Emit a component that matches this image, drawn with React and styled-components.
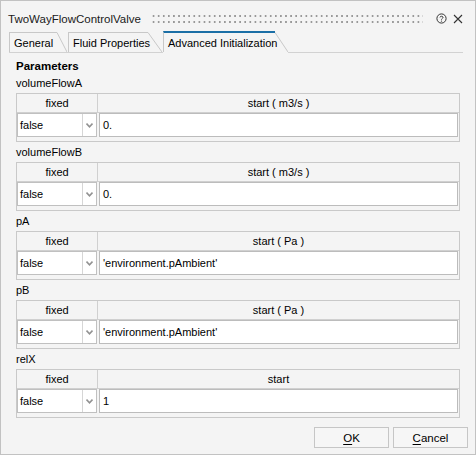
import React from 'react';
import styled, { createGlobalStyle } from 'styled-components';

const sections = [
  { name: 'volumeFlowA', unit: 'start ( m3/s )', value: '0.' },
  { name: 'volumeFlowB', unit: 'start ( m3/s )', value: '0.' },
  { name: 'pA', unit: 'start ( Pa )', value: "'environment.pAmbient'" },
  { name: 'pB', unit: 'start ( Pa )', value: "'environment.pAmbient'" },
  { name: 'relX', unit: 'start', value: '1' },
];

const tabs = [
  { label: 'General', width: 48, slant: 10, pad: 4 },
  { label: 'Fluid Properties', width: 80, slant: 14, pad: 4 },
  { label: 'Advanced Initialization', width: 112, slant: 13, pad: 4, active: true },
];

function Dialog() {
  return (
    <Window>
      <TitleBar>
        <Title>TwoWayFlowControlValve</Title>
        <Grip />
        <TitleIcon aria-label="help">
          <svg width="11" height="11" viewBox="0 0 11 11">
            <circle cx="5.5" cy="5.5" r="4.6" fill="none" stroke="#333" strokeWidth="1" />
            <path d="M4 4.4 C4 2.9 7 2.9 7 4.4 C7 5.4 5.5 5.5 5.5 6.6" fill="none" stroke="#333" strokeWidth="1" />
            <circle cx="5.5" cy="8.1" r="0.6" fill="#333" />
          </svg>
        </TitleIcon>
        <TitleIcon aria-label="close">
          <svg width="10" height="10" viewBox="0 0 10 10">
            <path d="M1 1 L9 9 M9 1 L1 9" stroke="#333" strokeWidth="1.1" />
          </svg>
        </TitleIcon>
      </TitleBar>

      <TabBar>
        {tabs.map((t) => (
          <Tab key={t.label} $active={t.active}>
            <TabLabel $active={t.active} $width={t.width} $pad={t.pad}>{t.label}</TabLabel>
            <svg width={t.slant} height={t.active ? 21 : 20} style={{ display: 'block' }}>
              <line x1="0" y1={t.active ? 1.5 : 0.5} x2={t.slant} y2={t.active ? 21 : 20} stroke="#c8c8c8" strokeWidth="1" />
            </svg>
          </Tab>
        ))}
      </TabBar>

      <Content>
        <Heading>Parameters</Heading>
        {sections.map((s) => (
          <Section key={s.name}>
            <SectionLabel>{s.name}</SectionLabel>
            <Table>
              <HeaderRow>
                <HeaderCell $divider>fixed</HeaderCell>
                <HeaderCell>{s.unit}</HeaderCell>
              </HeaderRow>
              <DataRow>
                <Combo>
                  <ComboText>false</ComboText>
                  <ComboArrow>
                    <svg width="7" height="5" viewBox="0 0 7 5">
                      <path d="M0.5 0.6 L3.5 3.8 L6.5 0.6" fill="none" stroke="#929292" strokeWidth="1.6" />
                    </svg>
                  </ComboArrow>
                </Combo>
                <ValueCell>{s.value}</ValueCell>
              </DataRow>
            </Table>
          </Section>
        ))}
      </Content>

      <Footer>
        <Button><u>O</u>K</Button>
        <Button><u>C</u>ancel</Button>
      </Footer>
    </Window>
  );
}

export default function App() {
  return (
    <>
      <GlobalStyle />
      <Dialog />
    </>
  );
}

const GlobalStyle = createGlobalStyle`
  html, body {
    margin: 0;
    padding: 0;
    background: #f4f4f4;
  }
  body {
    font-family: "Liberation Sans", Arial, sans-serif;
    font-size: 11px;
    color: #000;
  }
`;

const Window = styled.div`
  width: 476px;
  height: 455px;
  box-sizing: border-box;
  border: 1px solid #c2c2c2;
  background: #f4f4f4;
  display: flex;
  flex-direction: column;
`;

const TitleBar = styled.div`
  height: 30px;
  box-sizing: border-box;
  padding: 5px 9px 0 7px;
  display: flex;
  align-items: center;
`;

const Title = styled.div`
  font-size: 11.5px;
  line-height: 16px;
  color: #1a1a1a;
  white-space: nowrap;
`;

const Grip = styled.div`
  flex: 1;
  height: 12px;
  margin: 0 10px 0 10px;
  background-image: radial-gradient(circle, #999 0.95px, transparent 1.25px);
  background-size: 5.1px 6px;
`;

const TitleIcon = styled.div`
  width: 16px;
  height: 16px;
  display: flex;
  align-items: center;
  justify-content: center;
  & + & {
    margin-left: 1px;
  }
`;

const TabBar = styled.div`
  height: 21px;
  margin: 0 12px 0 8px;
  display: flex;
  align-items: flex-end;
  border-bottom: 1px solid #d2d2d2;
`;

const Tab = styled.div`
  display: flex;
  align-items: stretch;
  height: ${(p) => (p.$active ? '21px' : '20px')};
  margin-bottom: -1px;
  margin-right: ${(p) => (p.$active ? '0' : '1px')};
  border-bottom: 1px solid ${(p) => (p.$active ? '#f4f4f4' : '#d2d2d2')};
`;

const TabLabel = styled.div`
  width: ${(p) => p.$width}px;
  box-sizing: border-box;
  padding-left: ${(p) => p.$pad}px;
  border-left: 1px solid #c8c8c8;
  border-top: ${(p) => (p.$active ? '2px solid #1b6fa6' : '1px solid #c8c8c8')};
  display: flex;
  align-items: center;
  white-space: nowrap;
  font-size: 11px;
  color: #000;
`;

const Content = styled.div`
  padding: 5px 15px 0 15px;
  display: flex;
  flex-direction: column;
  gap: 2px;
`;

const Heading = styled.div`
  font-weight: bold;
  font-size: 11.5px;
  line-height: 16px;
  margin-bottom: -1px;
`;

const Section = styled.div`
  display: flex;
  flex-direction: column;
  gap: 2px;
`;

const SectionLabel = styled.div`
  line-height: 16px;
`;

const Table = styled.div`
  height: 49px;
  box-sizing: border-box;
  border: 1px solid #c9c9c9;
  display: flex;
  flex-direction: column;
`;

const HeaderRow = styled.div`
  height: 19px;
  box-sizing: border-box;
  border-bottom: 1px solid #d0d0d0;
  display: grid;
  grid-template-columns: 81px 1fr;
`;

const HeaderCell = styled.div`
  display: flex;
  align-items: center;
  justify-content: center;
  border-right: ${(p) => (p.$divider ? '1px solid #d0d0d0' : 'none')};
`;

const DataRow = styled.div`
  height: 24px;
  display: flex;
  padding-right: 1px;
`;

const Combo = styled.div`
  width: 80px;
  box-sizing: border-box;
  border: 1px solid #c0c0c0;
  background: #fff;
  display: flex;
`;

const ComboText = styled.div`
  flex: 1;
  padding-left: 2px;
  display: flex;
  align-items: center;
  border-right: 1px solid #d6d6d6;
`;

const ComboArrow = styled.div`
  width: 13px;
  display: flex;
  align-items: center;
  justify-content: center;
`;

const ValueCell = styled.div`
  flex: 1;
  margin-left: 2px;
  box-sizing: border-box;
  border: 1px solid #bcbcbc;
  background: #fff;
  padding-left: 3px;
  display: flex;
  align-items: center;
  white-space: nowrap;
`;

const Footer = styled.div`
  margin-top: auto;
  padding: 0 7px 6px 0;
  display: flex;
  justify-content: flex-end;
  gap: 4px;
`;

const Button = styled.button`
  width: 75px;
  height: 21px;
  box-sizing: border-box;
  border: 1px solid #c6c6c6;
  border-radius: 0;
  background: #f6f6f6;
  font-family: "Liberation Sans", Arial, sans-serif;
  font-size: 11.5px;
  color: #000;
  padding: 0;
  u {
    text-underline-offset: 2px;
  }
`;
